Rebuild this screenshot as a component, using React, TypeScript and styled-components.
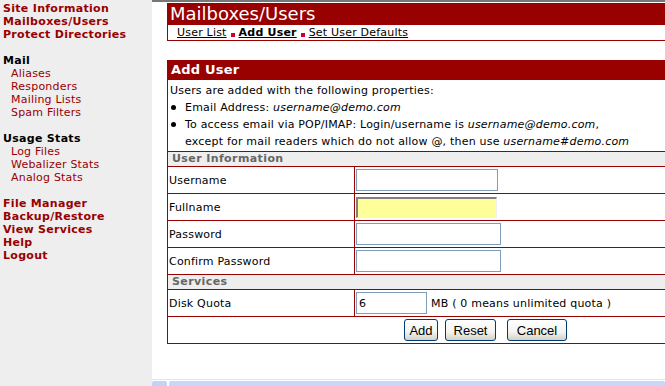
import React from "react";
import styled, { createGlobalStyle } from "styled-components";

const GlobalStyle = createGlobalStyle`
  html, body {
    margin: 0;
    padding: 0;
    background: #ffffff;
  }
  body {
    font-family: "DejaVu Sans", Verdana, sans-serif;
    font-size: 11px;
    letter-spacing: 0.2px;
    color: #000;
  }
`;

const Page = styled.div`
  display: flex;
  width: 665px;
  height: 386px;
  overflow: hidden;
`;

const Sidebar = styled.div`
  width: 149px;
  flex-shrink: 0;
  background: #eeeeee;
  padding: 2px 0 0 3px;
  display: flex;
  flex-direction: column;
  gap: 13px;
`;

const NavGroup = styled.div`
  display: flex;
  flex-direction: column;
`;

const NavLink = styled.a<{ $sub?: boolean }>`
  display: block;
  height: 13px;
  line-height: 13px;
  font-weight: ${(p) => (p.$sub ? "normal" : "bold")};
  letter-spacing: ${(p) => (p.$sub ? "0.2px" : "0.3px")};
  color: #990000;
  text-decoration: none;
  padding-left: ${(p) => (p.$sub ? "8px" : "0")};
  white-space: nowrap;
`;

const NavHeading = styled.div`
  height: 13px;
  line-height: 13px;
  font-weight: bold;
  letter-spacing: 0.3px;
  color: #000;
`;

const Main = styled.div`
  flex: 1;
  display: flex;
  flex-direction: column;
  border-top: 2px solid #777777;
  background: #fff;
  overflow: hidden;
`;

const Content = styled.div`
  flex: 1;
  padding: 1px 0 0 15px;
`;

const TitleBox = styled.div`
  width: 620px;
  border-left: 1px solid #990000;
  border-bottom: 1px solid #990000;
`;

const Title = styled.div`
  background: #990000;
  color: #fff;
  height: 22px;
  line-height: 22px;
  font-size: 18px;
  letter-spacing: 0;
  padding-left: 2px;
`;

const Tabs = styled.div`
  height: 15px;
  line-height: 15px;
  padding-left: 9px;
  display: flex;
  align-items: center;
  gap: 4px;
`;

const Tab = styled.a<{ $active?: boolean }>`
  color: #000;
  text-decoration: underline;
  font-weight: ${(p) => (p.$active ? "bold" : "normal")};
`;

const Dot = styled.span`
  display: inline-block;
  width: 4px;
  height: 4px;
  background: #cc0033;
  margin-top: 4px;
`;

const FormBox = styled.div`
  width: 620px;
  margin-top: 19px;
  border-left: 1px solid #990000;
  border-bottom: 1px solid #990000;
`;

const BoxHeader = styled.div`
  background: #990000;
  color: #fff;
  font-weight: bold;
  font-size: 13px;
  height: 20px;
  line-height: 20px;
  padding-left: 3px;
`;

const Intro = styled.div`
  padding: 2px 2px 1px;
  line-height: 17px;
`;

const Bullets = styled.ul`
  margin: 0;
  padding: 0;
  list-style: none;
`;

const Bullet = styled.li`
  position: relative;
  padding-left: 15px;
  &::before {
    content: "";
    position: absolute;
    left: 1px;
    top: 6px;
    width: 5px;
    height: 5px;
    border-radius: 50%;
    background: #000;
  }
`;

const Table = styled.table`
  width: 100%;
  border-collapse: collapse;
`;

const SectionCell = styled.td`
  background: #eeeeee;
  border-top: 1px solid #990000;
  height: 14px;
  line-height: 14px;
  padding: 0 0 0 4px;
  color: #666666;
  font-weight: bold;
  letter-spacing: 0.4px;
`;

const LabelCell = styled.td`
  width: 185px;
  height: 26px;
  border-top: 1px solid #990000;
  border-right: 1px solid #990000;
  padding: 0 0 0 1px;
`;

const FieldCell = styled.td`
  border-top: 1px solid #990000;
  padding: 0 0 0 1px;
  white-space: nowrap;
`;

const ButtonCell = styled.td`
  border-top: 1px solid #990000;
  height: 26px;
  padding: 0 0 0 236px;
`;

const TextInput = styled.input<{ $w: number; $focus?: boolean }>`
  box-sizing: border-box;
  width: ${(p) => p.$w}px;
  height: 22px;
  vertical-align: middle;
  font-family: "DejaVu Sans", Verdana, sans-serif;
  font-size: 11px;
  padding: 1px 2px;
  border: 1px solid #7f9db9;
  background: ${(p) => (p.$focus ? "#ffff99" : "#fff")};
  ${(p) =>
    p.$focus &&
    `
    border-top: 2px solid #808080;
    border-left: 2px solid #808080;
    border-right: 1px solid #f0f0f0;
    border-bottom: 1px solid #f0f0f0;
    height: 21px;
  `}
  outline: none;
`;

const Unit = styled.span`
  margin-left: 4px;
  vertical-align: middle;
`;

const Button = styled.button<{ $w: number; $gap?: number }>`
  box-sizing: border-box;
  width: ${(p) => p.$w}px;
  height: 22px;
  margin-right: ${(p) => p.$gap ?? 7}px;
  font-family: "Liberation Sans", Arial, sans-serif;
  font-size: 13px;
  color: #000;
  border: 1px solid #003c74;
  border-radius: 3px;
  background: linear-gradient(#ffffff, #f3f3ef 60%, #d6d0c5);
  padding: 0;
  vertical-align: middle;
`;

const ScrollBar = styled.div`
  height: 5px;
  border-top: 1px solid #e4e4e4;
  display: flex;
  gap: 2px;
  padding-top: 1px;
`;

const ScrollButton = styled.div`
  width: 15px;
  background: #c1d3fb;
  border-radius: 2px 2px 0 0;
`;

const ScrollTrack = styled.div`
  flex: 1;
  background: #c8d6fb;
  border-radius: 2px 2px 0 0;
`;

const App = () => {
  return (
    <Page>
      <GlobalStyle />
      <Sidebar>
        <NavGroup>
          <NavLink href="#">Site Information</NavLink>
          <NavLink href="#">Mailboxes/Users</NavLink>
          <NavLink href="#">Protect Directories</NavLink>
        </NavGroup>
        <NavGroup>
          <NavHeading>Mail</NavHeading>
          <NavLink $sub href="#">Aliases</NavLink>
          <NavLink $sub href="#">Responders</NavLink>
          <NavLink $sub href="#">Mailing Lists</NavLink>
          <NavLink $sub href="#">Spam Filters</NavLink>
        </NavGroup>
        <NavGroup>
          <NavHeading>Usage Stats</NavHeading>
          <NavLink $sub href="#">Log Files</NavLink>
          <NavLink $sub href="#">Webalizer Stats</NavLink>
          <NavLink $sub href="#">Analog Stats</NavLink>
        </NavGroup>
        <NavGroup>
          <NavLink href="#">File Manager</NavLink>
          <NavLink href="#">Backup/Restore</NavLink>
          <NavLink href="#">View Services</NavLink>
          <NavLink href="#">Help</NavLink>
          <NavLink href="#">Logout</NavLink>
        </NavGroup>
      </Sidebar>
      <Main>
        <Content>
          <TitleBox>
            <Title>Mailboxes/Users</Title>
            <Tabs>
              <Tab href="#">User List</Tab>
              <Dot />
              <Tab $active href="#">Add User</Tab>
              <Dot />
              <Tab href="#">Set User Defaults</Tab>
            </Tabs>
          </TitleBox>
          <FormBox>
            <BoxHeader>Add User</BoxHeader>
            <Intro>
              Users are added with the following properties:
              <Bullets>
                <Bullet>
                  Email Address: <i>username@demo.com</i>
                </Bullet>
                <Bullet>
                  To access email via POP/IMAP: Login/username is <i>username@demo.com</i>,
                  <br />
                  except for mail readers which do not allow @, then use <i>username#demo.com</i>
                </Bullet>
              </Bullets>
            </Intro>
            <Table>
              <tbody>
                <tr>
                  <SectionCell colSpan={2}>User Information</SectionCell>
                </tr>
                <tr>
                  <LabelCell>Username</LabelCell>
                  <FieldCell>
                    <TextInput $w={142} />
                  </FieldCell>
                </tr>
                <tr>
                  <LabelCell>Fullname</LabelCell>
                  <FieldCell>
                    <TextInput $w={141} $focus />
                  </FieldCell>
                </tr>
                <tr>
                  <LabelCell>Password</LabelCell>
                  <FieldCell>
                    <TextInput $w={145} type="password" />
                  </FieldCell>
                </tr>
                <tr>
                  <LabelCell>Confirm Password</LabelCell>
                  <FieldCell>
                    <TextInput $w={145} type="password" />
                  </FieldCell>
                </tr>
                <tr>
                  <SectionCell colSpan={2}>Services</SectionCell>
                </tr>
                <tr>
                  <LabelCell>Disk Quota</LabelCell>
                  <FieldCell>
                    <TextInput $w={71} defaultValue="6" />
                    <Unit>MB ( 0 means unlimited quota )</Unit>
                  </FieldCell>
                </tr>
                <tr>
                  <ButtonCell colSpan={2}>
                    <Button $w={34}>Add</Button>
                    <Button $w={51} $gap={11}>Reset</Button>
                    <Button $w={60}>Cancel</Button>
                  </ButtonCell>
                </tr>
              </tbody>
            </Table>
          </FormBox>
        </Content>
        <ScrollBar>
          <ScrollButton />
          <ScrollTrack />
        </ScrollBar>
      </Main>
    </Page>
  );
};

export default App;
